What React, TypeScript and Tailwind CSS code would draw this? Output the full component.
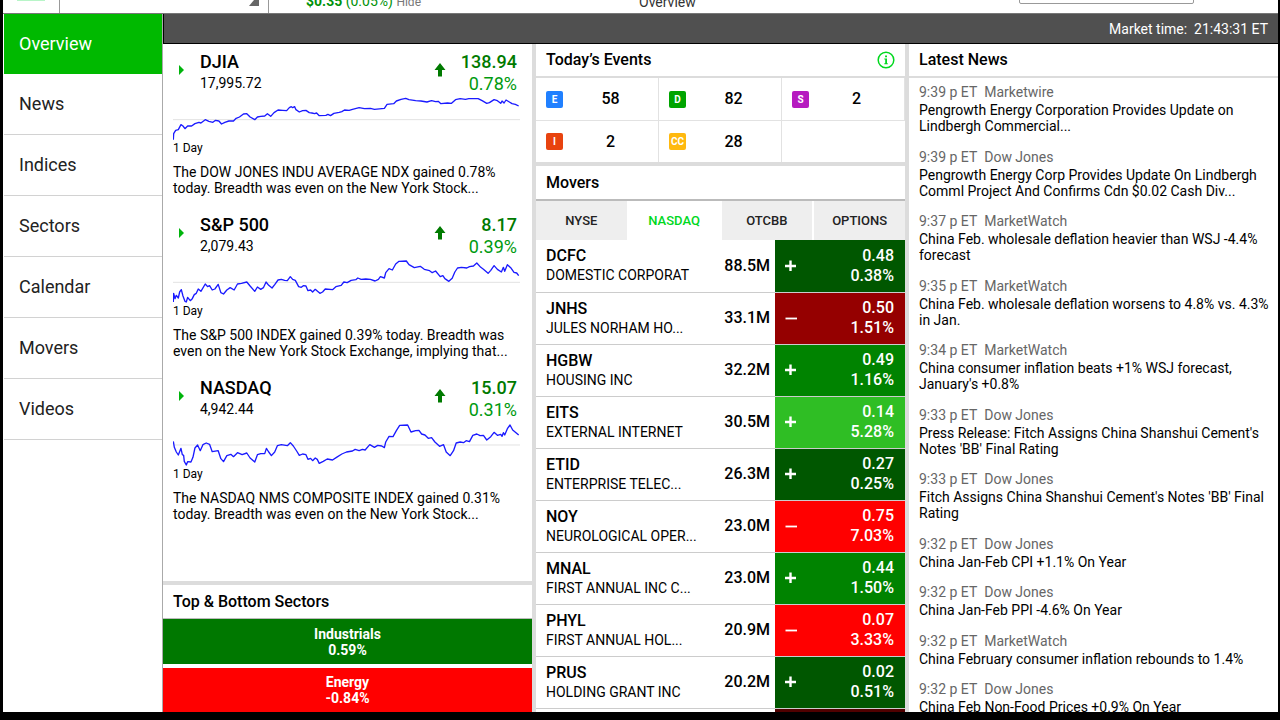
import { useState } from "react";

const NAV = ["Overview", "News", "Indices", "Sectors", "Calendar", "Movers", "Videos"];

type IndexInfo = {
  name: string;
  value: string;
  change: string;
  percent: string;
  summary: string;
  viewBox: string;
  base: number;
  points: string;
};

const INDICES: IndexInfo[] = [
  {
    name: "DJIA",
    value: "17,995.72",
    change: "138.94",
    percent: "0.78%",
    summary:
      "The DOW JONES INDU AVERAGE NDX gained 0.78% today. Breadth was even on the New York Stock...",
    viewBox: "40 170 1044 132",
    base: 238,
    points:
      "41,298 42,280 48,270 56,268 64,253 70,257 76,265 84,257 96,257 106,250 118,246 124,248 137,238 148,243 160,246 168,240 178,242 186,251 196,246 208,242 222,242 230,234 240,230 252,221 262,220 272,230 286,238 294,230 304,228 316,227 324,220 334,228 344,217 356,209 370,210 382,211 390,202 396,199 400,202 406,199 410,208 420,215 430,211 440,210 450,217 458,218 466,220 472,218 480,226 500,225 506,222 514,226 524,219 540,216 548,214 556,209 570,210 580,207 600,202 616,205 634,204 646,207 676,204 684,192 704,190 712,182 726,177 740,174 750,178 770,181 786,182 804,185 818,181 830,184 838,183 846,190 866,188 878,189 890,178 904,175 920,177 930,175 958,175 970,181 984,189 992,187 1006,178 1016,181 1026,189 1030,182 1036,188 1042,179 1052,185 1060,190 1070,192 1080,197",
  },
  {
    name: "S&P 500",
    value: "2,079.43",
    change: "8.17",
    percent: "0.39%",
    summary:
      "The S&P 500 INDEX gained 0.39% today. Breadth was even on the New York Stock Exchange, implying that...",
    viewBox: "40 180 1044 132",
    base: 247,
    points:
      "41,306 42,280 46,296 50,286 56,294 60,276 65,269 70,288 76,304 80,306 84,292 92,302 98,296 104,284 110,280 116,267 124,274 137,252 144,260 150,257 158,270 166,267 176,253 184,278 192,282 202,270 212,263 224,270 234,252 246,250 262,246 272,258 286,274 294,261 304,268 312,263 320,246 328,256 338,264 346,254 356,240 366,238 376,241 384,242 393,230 400,238 408,241 418,260 426,262 432,257 440,258 446,272 454,270 460,276 468,268 474,273 482,280 490,276 498,267 520,269 530,260 546,256 554,246 564,248 576,241 590,239 596,234 606,238 620,237 634,238 648,243 658,238 664,230 676,234 680,218 690,206 700,210 710,192 720,184 742,183 750,194 766,203 784,199 796,208 812,212 820,218 830,213 844,230 852,227 858,236 870,244 880,235 888,216 896,204 908,202 924,204 932,200 944,198 954,189 966,202 974,208 988,220 996,211 1006,197 1016,208 1028,216 1034,202 1038,214 1046,194 1056,203 1066,217 1074,219 1080,227",
  },
  {
    name: "NASDAQ",
    value: "4,942.44",
    change: "15.07",
    percent: "0.31%",
    summary:
      "The NASDAQ NMS COMPOSITE INDEX gained 0.31% today. Breadth was even on the New York Stock...",
    viewBox: "40 175 1044 132",
    base: 241,
    points:
      "41,230 44,248 50,262 56,271 64,251 68,270 72,272 74,290 80,301 84,291 94,292 100,278 106,250 114,241 122,258 130,240 140,235 150,239 158,261 176,258 184,282 192,291 202,273 214,269 222,276 234,264 248,270 262,265 272,280 286,292 294,270 304,267 316,267 321,251 328,262 336,273 346,262 354,243 366,240 384,243 393,234 402,244 412,259 420,272 430,268 440,270 446,284 454,281 460,288 468,280 474,284 480,296 492,290 504,283 520,286 532,278 548,268 562,262 580,259 588,254 600,258 610,254 618,256 632,240 646,248 656,242 668,244 676,249 680,232 690,215 702,216 712,198 722,182 746,181 756,202 770,198 780,197 788,208 798,211 808,221 818,219 828,232 842,245 854,240 862,262 874,273 884,258 892,235 904,232 914,234 922,228 932,231 942,212 954,208 964,213 974,212 984,226 996,216 1006,203 1016,212 1026,209 1030,215 1034,204 1038,211 1046,192 1054,181 1062,196 1072,204 1080,211",
  },
];

const EVENTS = [
  { code: "E", label: "Earnings", count: 58, color: "bg-[#2080ff]" },
  { code: "D", label: "Dividends", count: 82, color: "bg-[#00a400]" },
  { code: "S", label: "Splits", count: 2, color: "bg-[#b61bc0]" },
  { code: "I", label: "IPOs", count: 2, color: "bg-[#e8430f]" },
  { code: "CC", label: "Conference calls", count: 28, color: "bg-[#ffb90f]" },
];

const TABS = ["NYSE", "NASDAQ", "OTCBB", "OPTIONS"];

const MOVERS = [
  { symbol: "DCFC", name: "DOMESTIC CORPORAT", volume: "88.5M", up: true, change: "0.48", percent: "0.38%", color: "bg-[#005700]" },
  { symbol: "JNHS", name: "JULES NORHAM HO...", volume: "33.1M", up: false, change: "0.50", percent: "1.51%", color: "bg-[#950000]" },
  { symbol: "HGBW", name: "HOUSING INC", volume: "32.2M", up: true, change: "0.49", percent: "1.16%", color: "bg-[#008300]" },
  { symbol: "EITS", name: "EXTERNAL INTERNET", volume: "30.5M", up: true, change: "0.14", percent: "5.28%", color: "bg-[#2fbe24]" },
  { symbol: "ETID", name: "ENTERPRISE TELEC...", volume: "26.3M", up: true, change: "0.27", percent: "0.25%", color: "bg-[#005700]" },
  { symbol: "NOY", name: "NEUROLOGICAL OPER...", volume: "23.0M", up: false, change: "0.75", percent: "7.03%", color: "bg-[#ff0000]" },
  { symbol: "MNAL", name: "FIRST ANNUAL INC C...", volume: "23.0M", up: true, change: "0.44", percent: "1.50%", color: "bg-[#008300]" },
  { symbol: "PHYL", name: "FIRST ANNUAL HOL...", volume: "20.9M", up: false, change: "0.07", percent: "3.33%", color: "bg-[#ff0000]" },
  { symbol: "PRUS", name: "HOLDING GRANT INC", volume: "20.2M", up: true, change: "0.02", percent: "0.51%", color: "bg-[#005700]" },
];

const NEWS = [
  { time: "9:39 p ET", source: "Marketwire", title: "Pengrowth Energy Corporation Provides Update on Lindbergh Commercial..." },
  { time: "9:39 p ET", source: "Dow Jones", title: "Pengrowth Energy Corp Provides Update On Lindbergh Comml Project And Confirms Cdn $0.02 Cash Div..." },
  { time: "9:37 p ET", source: "MarketWatch", title: "China Feb. wholesale deflation heavier than WSJ -4.4% forecast" },
  { time: "9:35 p ET", source: "MarketWatch", title: "China Feb. wholesale deflation worsens to 4.8% vs. 4.3% in Jan." },
  { time: "9:34 p ET", source: "MarketWatch", title: "China consumer inflation beats +1% WSJ forecast, January's +0.8%" },
  { time: "9:33 p ET", source: "Dow Jones", title: "Press Release: Fitch Assigns China Shanshui Cement's Notes 'BB' Final Rating" },
  { time: "9:33 p ET", source: "Dow Jones", title: "Fitch Assigns China Shanshui Cement's Notes 'BB' Final Rating" },
  { time: "9:32 p ET", source: "Dow Jones", title: "China Jan-Feb CPI +1.1% On Year" },
  { time: "9:32 p ET", source: "Dow Jones", title: "China Jan-Feb PPI -4.6% On Year" },
  { time: "9:32 p ET", source: "MarketWatch", title: "China February consumer inflation rebounds to 1.4%" },
  { time: "9:32 p ET", source: "Dow Jones", title: "China Feb Non-Food Prices +0.9% On Year" },
];

function TopBar() {
  return (
    <header className="flex h-[14px] shrink-0 items-end overflow-hidden border-b border-[#777] bg-white text-sm leading-5">
      <div className="flex h-full w-[57px] items-start justify-center border-r border-[#999]">
        <span className="h-px w-7 bg-[#b8f5c8]" />
      </div>
      <div className="flex h-full w-[209px] items-start justify-end border-r border-[#999] pr-[9px]">
        <svg viewBox="0 0 10 6" className="h-[6px] w-[10px]" aria-hidden="true">
          <path d="M5 0 H10 V6 H0 Z" fill="#666" />
        </svg>
      </div>
      <p className="w-[370px] pb-[2px] pl-[37px] text-[#00920a]">
        <strong className="font-bold">$0.35</strong> (0.05%){" "}
        <a href="#hide" className="text-xs text-[#777]">
          Hide
        </a>
      </p>
      <h1 className="pb-px text-sm leading-5 text-[#333]">Overview</h1>
      <input
        type="search"
        aria-label="Search symbols"
        className="mr-[84px] mb-[9px] ml-auto h-8 w-[175px] rounded-xs border border-[#999] bg-white"
      />
    </header>
  );
}

function Sidebar({ active, onSelect }: { active: string; onSelect: (name: string) => void }) {
  return (
    <nav className="w-[160px] shrink-0 border-r border-[#aaa] bg-white">
      {NAV.map((item) => (
        <a
          key={item}
          href={"#" + item.toLowerCase()}
          onClick={() => onSelect(item)}
          className={
            item === active
              ? "ml-px flex h-[60px] items-center bg-[#00b900] pl-[15px] text-lg text-white"
              : "ml-px flex h-[61px] items-center border-b border-[#d2d2d2] pl-[15px] text-lg text-[#222]"
          }
        >
          {item}
        </a>
      ))}
    </nav>
  );
}

function IndexPanel({ info }: { info: IndexInfo }) {
  return (
    <article className="pt-[7px] pr-3 pb-[11px] pl-[10px] text-black">
      <div className="flex items-start">
        <svg viewBox="0 0 5 10" className="mt-[14px] ml-[6px] h-[10px] w-[5px] shrink-0" aria-hidden="true">
          <path d="M0 0 L5 5 L0 10 Z" fill="#00b40c" />
        </svg>
        <div className="ml-4 flex-1">
          <h3 className="text-lg leading-[22px] font-medium">{info.name}</h3>
          <p className="text-sm leading-[21px]">{info.value}</p>
        </div>
        <svg viewBox="0 0 12 14" className="mt-3 h-[14px] w-3" aria-hidden="true">
          <path d="M6 0 L11.500 7 H8 V13.500 H4 V7 H0.500 Z" fill="#007a00" />
        </svg>
        <div className="w-[74px] pr-[3px] text-right text-lg text-[#007a00]">
          <p className="leading-[22px] font-medium">{info.change}</p>
          <p className="leading-[21px] text-[#009a0e]">{info.percent}</p>
        </div>
      </div>
      <svg viewBox={info.viewBox} preserveAspectRatio="none" className="mt-[3px] block h-11 w-full" role="img" aria-label={info.name + " intraday chart"}>
        <line x1="40" x2="1084" y1={info.base} y2={info.base} stroke="#e2e2e2" strokeWidth="3" />
        <polyline points={info.points} fill="none" stroke="#1a1aff" strokeWidth="4" strokeLinejoin="round" />
      </svg>
      <p className="text-xs leading-[15px]">1 Day</p>
      <p className="mt-2 text-sm leading-4">{info.summary}</p>
    </article>
  );
}

function SectionTitle({ children }: { children: string }) {
  return <h2 className="text-base font-medium text-black">{children}</h2>;
}

function IndicesColumn() {
  return (
    <section className="flex min-h-0 flex-col bg-white">
      <div className="flex-1 overflow-hidden">
        {INDICES.map((info) => (
          <IndexPanel key={info.name} info={info} />
        ))}
      </div>
      <div className="flex h-[38px] shrink-0 items-center border-t-4 border-b border-t-[#dcdcdc] border-b-[#bbb] px-[10px]">
        <SectionTitle>Top &amp; Bottom Sectors</SectionTitle>
      </div>
      <div className="flex flex-col gap-1 text-center text-sm leading-4 font-bold text-white">
        <a href="#industrials" className="flex h-[45px] flex-col justify-center bg-[#007800]">
          <span>Industrials</span>
          <span>0.59%</span>
        </a>
        <a href="#energy" className="flex h-[44px] flex-col justify-center bg-[#ff0000]">
          <span>Energy</span>
          <span>-0.84%</span>
        </a>
      </div>
    </section>
  );
}

function Events() {
  return (
    <>
      <div className="flex h-[34px] shrink-0 items-center justify-between border-b-2 border-[#dcdcdc] pr-[10px] pl-[10px]">
        <SectionTitle>Today’s Events</SectionTitle>
        <button type="button" aria-label="About events">
          <svg viewBox="0 0 18 18" className="h-[18px] w-[18px]" aria-hidden="true">
            <circle cx="9" cy="9" r="7.800" fill="none" stroke="#00d81e" strokeWidth="1.500" />
            <path d="M8.100 4.500 H10 V6.300 H8.100 Z M7.300 7.500 H10 V12.300 H10.800 V13.300 H7.300 V12.300 H8.200 V8.500 H7.300 Z" fill="#00d81e" />
          </svg>
        </button>
      </div>
      <div className="grid shrink-0 grid-cols-3 border-b-4 border-[#dcdcdc]">
        {EVENTS.map((e, i) => (
          <a
            key={e.code}
            href={"#" + e.code}
            title={e.label}
            className={
              i < 3
                ? "flex h-[43px] items-center border-r border-b border-[#e2e2e2] pl-[10px]"
                : "flex h-[41px] items-center border-r border-[#e2e2e2] pl-[10px]"
            }
          >
            <span className={"flex h-[17px] w-[17px] items-center justify-center rounded-xs text-[10px] font-bold text-white " + e.color}>
              {e.code}
            </span>
            <span className="flex-1 text-center text-base font-medium text-black">{e.count}</span>
          </a>
        ))}
      </div>
    </>
  );
}

function Movers() {
  const [tab, setTab] = useState("NASDAQ");
  return (
    <>
      <div className="flex h-[35px] shrink-0 items-center border-b-2 border-[#bbb] px-[10px]">
        <SectionTitle>Movers</SectionTitle>
      </div>
      <div role="tablist" className="grid h-[39px] shrink-0 grid-cols-4 gap-[2px]">
        {TABS.map((name) => (
          <button
            key={name}
            type="button"
            role="tab"
            aria-selected={name === tab}
            onClick={() => setTab(name)}
            className={
              name === tab
                ? "bg-white text-[13px] font-medium text-[#00d81e]"
                : "bg-[#eee] text-[13px] font-medium text-[#222]"
            }
          >
            {name}
          </button>
        ))}
      </div>
      <div className="min-h-0 flex-1 overflow-hidden">
        <table className="w-full table-fixed border-collapse">
          <colgroup>
            <col />
            <col className="w-[56px]" />
            <col className="w-[31px]" />
            <col className="w-[99px]" />
          </colgroup>
          <tbody>
            {MOVERS.map((m) => (
              <tr key={m.symbol} className="h-[52px] border-b border-[#ccc]">
                <th scope="row" className="overflow-hidden p-0 pl-[10px] text-left align-top whitespace-nowrap text-black">
                  <span className="block pt-[6px] text-base leading-5 font-medium">{m.symbol}</span>
                  <span className="block text-sm leading-[18px] font-normal">{m.name}</span>
                </th>
                <td className="p-0 pr-[5px] text-right text-base font-medium text-black">{m.volume}</td>
                <td className={"p-0 pl-[10px] text-white " + m.color}>
                  <svg viewBox="0 0 12 12" className="h-3 w-3" role="img" aria-label={m.up ? "up" : "down"}>
                    <path d={m.up ? "M5.500 0.500 V11 M0 6 H11" : "M0.500 6.500 H12"} stroke="#fff" strokeWidth={m.up ? 2.4 : 1.8} />
                  </svg>
                </td>
                <td className={"p-0 pr-[11px] text-right text-base leading-5 font-medium text-white " + m.color}>
                  <div>{m.change}</div>
                  <div>{m.percent}</div>
                </td>
              </tr>
            ))}
            <tr className="h-[52px]">
              <td colSpan={2} />
              <td colSpan={2} className="bg-[#500000]" />
            </tr>
          </tbody>
        </table>
      </div>
    </>
  );
}

function News() {
  return (
    <section className="flex min-h-0 flex-col overflow-hidden bg-white">
      <div className="flex h-[34px] shrink-0 items-center border-b-2 border-[#dcdcdc] px-[10px]">
        <SectionTitle>Latest News</SectionTitle>
      </div>
      <ul className="mt-[5px] -mb-[3px] flex min-h-0 flex-1 flex-col justify-between pl-[10px]">
        {NEWS.map((n) => (
          <li key={n.title}>
            <p className="text-sm leading-[18px] text-[#666]">
              {n.time}&nbsp; {n.source}
            </p>
            <a href="#story" className="mt-px block text-sm leading-4 text-black">
              {n.title}
            </a>
          </li>
        ))}
      </ul>
    </section>
  );
}

export default function App() {
  const [active, setActive] = useState("Overview");
  return (
    <div className="flex h-screen flex-col overflow-hidden bg-black pr-[2px] pb-2 pl-[3px] font-[Roboto,sans-serif]">
      <TopBar />
      <div className="flex min-h-0 flex-1">
        <Sidebar active={active} onSelect={setActive} />
        <main className="flex min-w-0 flex-1 flex-col bg-[#dcdcdc]">
          <div className="flex h-[30px] shrink-0 items-center justify-end border-b border-l border-black bg-[#505050] pr-[10px] text-sm text-white">
            Market time:&nbsp; 21:43:31 ET
          </div>
          <div className="grid min-h-0 flex-1 grid-cols-3 grid-rows-[minmax(0,1fr)] gap-1">
            <IndicesColumn />
            <section className="flex min-h-0 flex-col overflow-hidden bg-white">
              <Events />
              <Movers />
            </section>
            <News />
          </div>
        </main>
      </div>
    </div>
  );
}
